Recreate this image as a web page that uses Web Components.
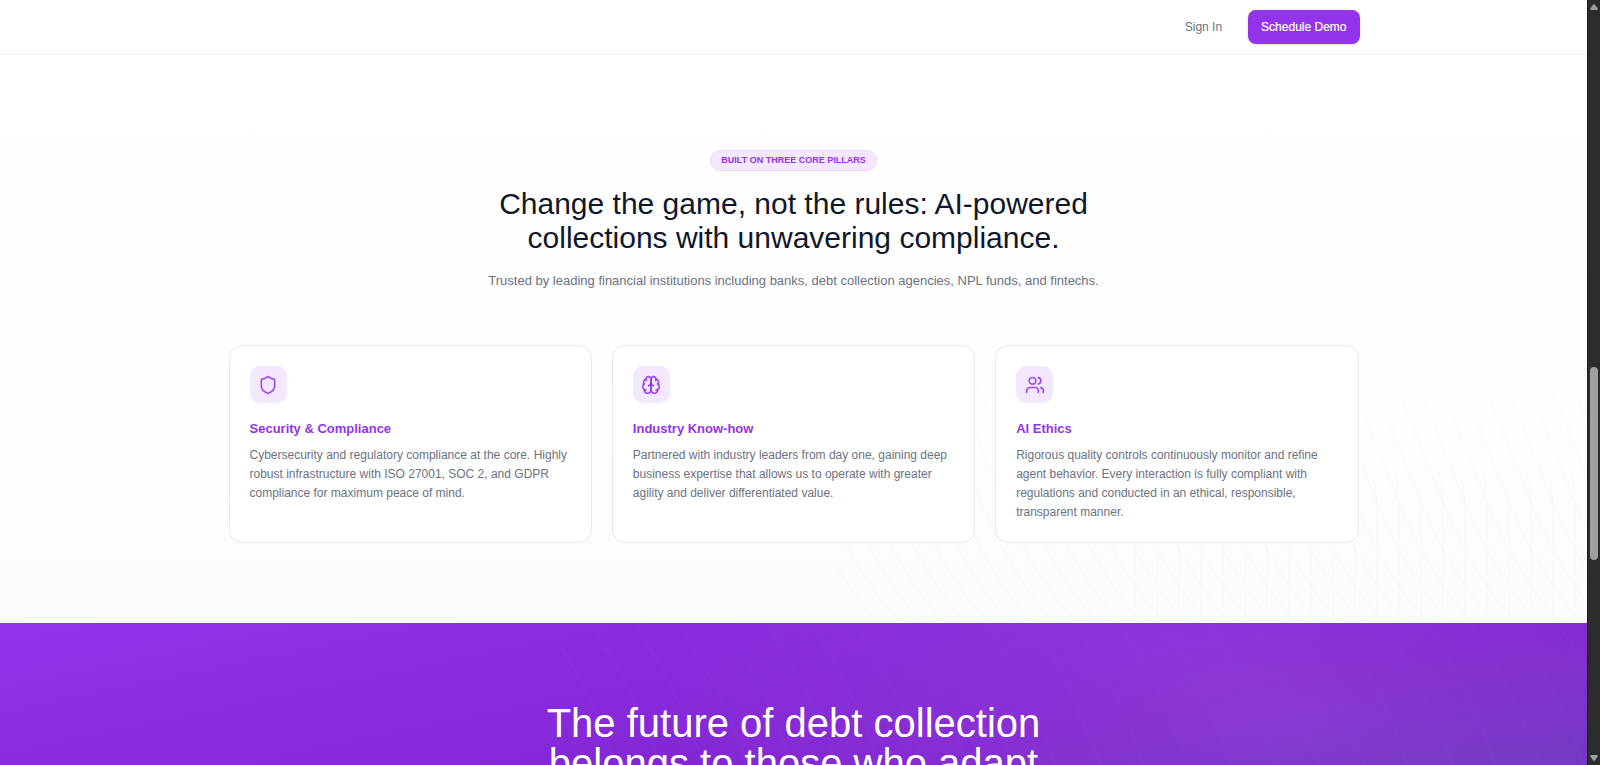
<!DOCTYPE html>
<html lang="en">
<head>
<meta charset="utf-8">
<title>AI-powered collections</title>
<style>
  body { margin: 0; font-family: "Liberation Sans", Arial, sans-serif; color: #6b7280; background: #fff; }
</style>
</head>
<body>
<app-window>
  <site-header>
    <a slot="links" href="#signin">Sign In</a>
    <span slot="action">Schedule Demo</span>
  </site-header>
  <pillars-section>
    <span slot="badge">BUILT ON THREE CORE PILLARS</span>
    <span slot="title">Change the game, not the rules: AI-powered collections with unwavering compliance.</span>
    <span slot="lead">Trusted by leading financial institutions including banks, debt collection agencies, NPL funds, and fintechs.</span>
    <pillar-card icon="shield">
      <span slot="title">Security &amp; Compliance</span>
      Cybersecurity and regulatory compliance at the core. Highly robust infrastructure with ISO 27001, SOC 2, and GDPR compliance for maximum peace of mind.
    </pillar-card>
    <pillar-card icon="brain">
      <span slot="title">Industry Know-how</span>
      Partnered with industry leaders from day one, gaining deep business expertise that allows us to operate with greater agility and deliver differentiated value.
    </pillar-card>
    <pillar-card icon="users">
      <span slot="title">AI Ethics</span>
      Rigorous quality controls continuously monitor and refine agent behavior. Every interaction is fully compliant with regulations and conducted in an ethical, responsible, transparent manner.
    </pillar-card>
  </pillars-section>
  <cta-banner>The future of debt collection belongs to those who adapt</cta-banner>
</app-window>

<script>
class BaseElement extends HTMLElement {
  constructor() {
    super();
    this.attachShadow({ mode: 'open' }).innerHTML = this.template();
  }
}

customElements.define('app-window', class extends BaseElement {
  template() {
    return `<style>
      :host { display: flex; height: 100vh; overflow: hidden; }
      .page { flex: 1; min-width: 0; overflow: hidden; display: flex; flex-direction: column; }
      ::slotted(*) { flex-shrink: 0; }
    </style>
    <div class="page"><slot></slot></div>
    <scroll-rail></scroll-rail>`;
  }
});

customElements.define('scroll-rail', class extends BaseElement {
  template() {
    return `<style>
      :host { display: flex; flex-direction: column; align-items: center; width: 13px; box-sizing: border-box;
        background: #2c2c2c; border-left: 1px solid #1c1c1c; padding: 4px 1px 4px 0; flex-shrink: 0; }
      svg { display: block; width: 8px; height: 6px; fill: #9f9fa1; }
      .track { flex: 1; display: grid; grid-template-rows: 357fr 193fr 195fr; width: 8px; }
      .thumb { grid-row: 2; background: #9f9fa1; border-radius: 4px; }
    </style>
    <svg viewBox="0 0 8 6"><path d="M3.2.6Q4-.3 4.8.6L7.7 4.6Q8 6 7 6H1Q0 6 .3 4.6Z"/></svg>
    <div class="track"><div class="thumb"></div></div>
    <svg viewBox="0 0 8 6"><path d="M3.2 5.4Q4 6.3 4.8 5.4L7.7 1.4Q8 0 7 0H1Q0 0 .3 1.4Z"/></svg>`;
  }
});

customElements.define('site-header', class extends BaseElement {
  template() {
    return `<style>
      :host { display: block; background: #fff; border-bottom: 1px solid #f1f1f6; padding: 0 20px; }
      nav { max-width: 1132px; height: 54px; margin: 0 auto; display: flex; align-items: center; justify-content: flex-end; gap: 26px; }
      ::slotted(a) { color: #6b7280; text-decoration: none; font-size: 12px; line-height: 16px; }
      button { font: 12px/16px "Liberation Sans", Arial, sans-serif; color: #fff; background: #9333ea; border: 0;
        border-radius: 8px; padding: 9px 13px; box-shadow: 0 1px 3px rgba(0,0,0,.14); -webkit-text-stroke: .2px #fff; }
    </style>
    <nav><slot name="links"></slot><button type="button"><slot name="action"></slot></button></nav>`;
  }
});

/* Faint flowing lines in the lower right corner of the light section. */
customElements.define('wave-lines', class extends BaseElement {
  template() {
    let waves = '', rails = '';
    for (let x = 42; x < 1000; x += 22) {
      waves += `<path d="M${x - 300} -20C${x - 200} 25 ${x - 145} 110 ${x - 114} 180S${x - 62} 335 ${x} 400"/>`;
    }
    for (let x = 298; x < 750; x += 22) {
      rails += `<path d="M${x - 7} 140V210C${x - 7} 240 ${x} 260 ${x} 290V400"/>`;
    }
    return `<style>:host { display: block; } svg { display: block; width: 100%; height: 100%; }</style>
    <svg viewBox="0 0 750 400" preserveAspectRatio="xMaxYMax slice" fill="none" stroke-width="1">
      <defs>
        <linearGradient id="fade" gradientUnits="userSpaceOnUse" x1="0" y1="0" x2="0" y2="400">
          <stop offset="0.05" stop-color="#7c5cf6" stop-opacity="0"/>
          <stop offset="0.5" stop-color="#7c5cf6" stop-opacity=".03"/>
          <stop offset="1" stop-color="#8b4cf6" stop-opacity=".05"/>
        </linearGradient>
        <linearGradient id="rise" gradientUnits="userSpaceOnUse" x1="0" y1="140" x2="0" y2="400">
          <stop offset="0" stop-color="#8b4cf6" stop-opacity="0"/>
          <stop offset="0.6" stop-color="#8b4cf6" stop-opacity=".03"/>
          <stop offset="1" stop-color="#8b4cf6" stop-opacity=".04"/>
        </linearGradient>
      </defs>
      <g stroke="url(#fade)">${waves}</g><g stroke="url(#rise)">${rails}</g>
    </svg>`;
  }
});

customElements.define('pillars-section', class extends BaseElement {
  template() {
    return `<style>
      :host { display: block; position: relative; overflow: hidden; padding: 95px 20px 80px; background: linear-gradient(#fff, #fcfcff); }
      wave-lines { position: absolute; right: 0; bottom: 0; width: 750px; height: 400px; }
      .intro { display: flex; flex-direction: column; align-items: center; text-align: center; position: relative; }
      .badge { font-size: 9px; line-height: 11px; font-weight: 700; color: #9333ea; background: #f3e8ff;
        border: 1px solid #e9d5ff; border-radius: 11px; padding: 4px 10px; }
      h2 { margin: 16px 0 0; max-width: 640px; font-size: 30px; line-height: 34px; font-weight: 400; color: #0f172a; }
      p { margin: 16px 0 0; font-size: 13px; line-height: 20px; }
      .cards { position: relative; display: grid; grid-template-columns: repeat(3, minmax(0, 1fr)); gap: 20px; max-width: 1130px; margin: 54px auto 0; }
    </style>
    <wave-lines></wave-lines>
    <div class="intro">
      <div class="badge"><slot name="badge"></slot></div>
      <h2><slot name="title"></slot></h2>
      <p><slot name="lead"></slot></p>
    </div>
    <div class="cards"><slot></slot></div>`;
  }
});

const ICONS = {
  shield: '<path d="M20 13c0 5-3.5 7.5-7.66 8.95a1 1 0 0 1-.67-.01C7.5 20.5 4 18 4 13V6a1 1 0 0 1 1-1c2 0 4.500-1.200 6.240-2.720a1.170 1.170 0 0 1 1.520 0C14.510 3.810 17 5 19 5a1 1 0 0 1 1 1z"/>',
  brain: '<path d="M12 5a3 3 0 1 0-5.997.125 4 4 0 0 0-2.526 5.770 4 4 0 0 0 .556 6.588A4 4 0 1 0 12 18Z"/><path d="M12 5a3 3 0 1 1 5.997.125 4 4 0 0 1 2.526 5.770 4 4 0 0 1-.556 6.588A4 4 0 1 1 12 18Z"/><path d="M15 13a4.500 4.500 0 0 1-3-4 4.500 4.500 0 0 1-3 4"/><path d="M17.599 6.500a3 3 0 0 0 .399-1.375"/><path d="M6.003 5.125A3 3 0 0 0 6.401 6.500"/><path d="M3.477 10.896a4 4 0 0 1 .585-.396"/><path d="M19.938 10.500a4 4 0 0 1 .585.396"/><path d="M6 18a4 4 0 0 1-1.967-.516"/><path d="M19.967 17.484A4 4 0 0 1 18 18"/>',
  users: '<path d="M16 21v-2a4 4 0 0 0-4-4H6a4 4 0 0 0-4 4v2"/><circle cx="9" cy="7" r="4"/><path d="M22 21v-2a4 4 0 0 0-3-3.870"/><path d="M16 3.130a4 4 0 0 1 0 7.750"/>'
};

customElements.define('pillar-card', class extends BaseElement {
  template() {
    return `<style>
      :host { display: block; background: #fff; border: 1px solid #e8e8ee; border-radius: 13px; padding: 20px; }
      .icon { width: 37px; height: 37px; border-radius: 10px; background: #f3e8ff; display: grid; place-items: center; }
      svg { display: block; width: 20px; height: 20px; fill: none; stroke: #9333ea; stroke-opacity: .88; stroke-width: 2; stroke-linecap: round; stroke-linejoin: round; }
      h3 { margin: 16px 0 7px; font-size: 13px; line-height: 20px; font-weight: 700; color: #9333ea; }
      p { margin: 0; font-size: 12px; line-height: 19px; }
    </style>
    <div class="icon"><svg viewBox="0 0 24 24" aria-hidden="true"></svg></div>
    <h3><slot name="title"></slot></h3>
    <p><slot></slot></p>`;
  }
  connectedCallback() {
    this.shadowRoot.querySelector('svg').innerHTML = ICONS[this.getAttribute('icon')] || '';
  }
});

customElements.define('cta-banner', class extends BaseElement {
  template() {
    let lines = '';
    for (let x = 548; x < 1700; x += 44) {
      lines += `<path d="M${x} 3C${x + 28} 45 ${x + 50} 90 ${x + 68} 142S${x + 100} 280 ${x + 120} 330"/>`;
    }
    return `<style>
      :host { display: block; position: relative; overflow: hidden; padding: 80px 20px 170px; color: #fff;
        background:
          radial-gradient(ellipse 620px 260px at 80% 90px, rgba(255,255,255,.09), rgba(255,255,255,0)),
          linear-gradient(to bottom right, #9333ea, #8024d0 50%, #5742ac); }
      svg { position: absolute; left: 0; top: 0; width: 100%; height: 100%; }
      h2 { position: relative; margin: 0 auto; max-width: 540px; font-size: 40px; line-height: 40px; font-weight: 400; text-align: center; }
    </style>
    <svg viewBox="0 0 1588 330" preserveAspectRatio="xMinYMin slice" fill="none" stroke-width="2" aria-hidden="true">
      <g stroke="#8250f0" stroke-opacity=".13">${lines}</g>
    </svg>
    <h2><slot></slot></h2>`;
  }
});
</script>
</body>
</html>
